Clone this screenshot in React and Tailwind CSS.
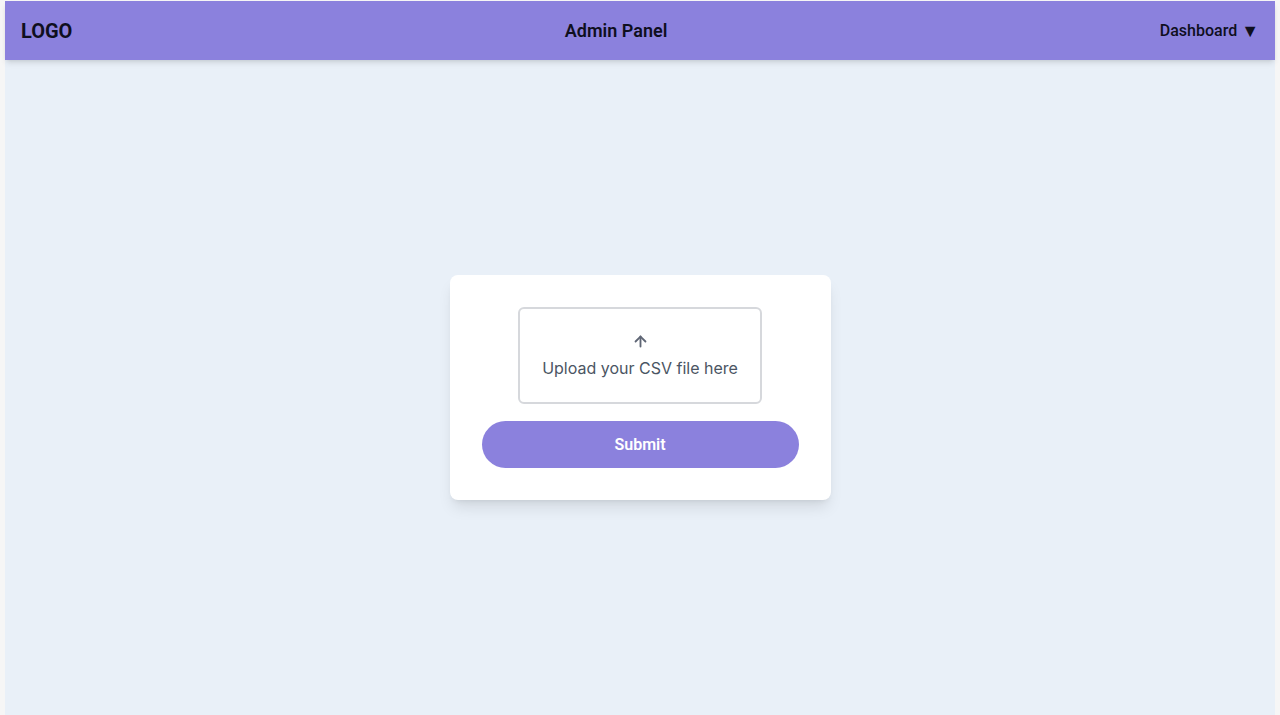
import { ArrowUp } from 'lucide-react';

export default function App() {
  return (
    <div className="h-[715px] bg-[#f6f6f6] px-[5px] pt-px" style={{ fontFamily: 'Roboto, sans-serif' }}>
      <div className="h-full flex flex-col bg-[#e9f0f8]">
        <header className="h-[59px] shrink-0 bg-[#8b81dd] flex items-center justify-between px-4 shadow-md relative z-10">
          <div className="text-[20px] font-bold text-[#0f0f1e]">LOGO</div>
          <div className="text-[18px] font-semibold text-[#0f0f1e]">Admin Panel</div>
          <div className="flex items-center gap-[4px] text-[16px] font-medium text-[#0f0f1e]">
            Dashboard <span className="text-[18px] leading-none">▼</span>
          </div>
        </header>
        <main className="flex-1 flex items-center justify-center">
          <div className="w-[381px] bg-white rounded-lg shadow-lg p-8 flex flex-col items-center">
            <div
              className="w-[244px] h-[97px] border-2 border-[#d6d8dc] rounded-md flex flex-col items-center justify-center gap-[8px] text-[#4b5563]"
              style={{ fontFamily: 'Inter, sans-serif' }}
            >
              <ArrowUp size={17} strokeWidth={2.6} className="text-[#5f6675]" />
              <span className="text-[16px] leading-5">Upload your CSV file here</span>
            </div>
            <button className="mt-[17px] w-full h-[47px] rounded-full bg-[#8b81dd] text-white text-[16px] font-semibold">
              Submit
            </button>
          </div>
        </main>
      </div>
    </div>
  );
}
